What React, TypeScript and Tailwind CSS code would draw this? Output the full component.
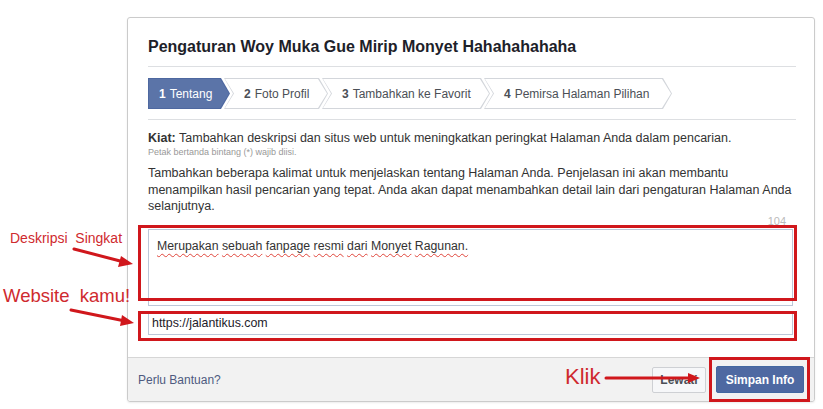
import React from 'react';

const tabs = [
  { n: '1', label: 'Tentang', w: 'w-[82px]', first: true, active: true },
  { n: '2', label: 'Foto Profil', w: 'w-[104px]' },
  { n: '3', label: 'Tambahkan ke Favorit', w: 'w-[168px]' },
  { n: '4', label: 'Pemirsa Halaman Pilihan', w: 'w-[188px]' },
];

const descWords = ['Merupakan', 'sebuah', 'fanpage', 'resmi', 'dari', 'Monyet', 'Ragunan.'];

function Tab({ n, label, w, first, active }: { n: string; label: string; w: string; first?: boolean; active?: boolean }) {
  const shape = first
    ? '[clip-path:polygon(0_0,calc(100%_-_9px)_0,100%_50%,calc(100%_-_9px)_100%,0_100%)]'
    : '[clip-path:polygon(0_0,calc(100%_-_9px)_0,100%_50%,calc(100%_-_9px)_100%,0_100%,9px_50%)]';

  return (
    <div className={`relative h-[31px] shrink-0 ${w} ${first ? '' : '-ml-[6px]'}`}>
      <div className={`absolute inset-0 ${shape} ${active ? 'bg-[#4e68a0]' : 'bg-[#d3d6db]'}`} />
      <div className={`absolute inset-[1px] ${shape} ${active ? 'bg-[#5b74a8]' : 'bg-white'}`} />
      <div
        className={`relative flex h-full items-center text-[12px] ${first ? 'pl-[11px]' : 'pl-[20px]'} ${
          active ? 'text-white' : 'text-[#4b4f56]'
        }`}
      >
        <span className="font-bold">{n}</span>
        <span className="ml-[4px]">{label}</span>
      </div>
    </div>
  );
}

export default function App() {
  return (
    <div className="relative h-[409px] w-[823px] overflow-hidden bg-white font-['Liberation_Sans',Arial,sans-serif]">
      <div className="ml-[127px] mt-[17px] flex h-[385px] w-[688px] flex-col rounded-[3px] border border-[#cbcbcb] shadow-[0_1px_2px_rgba(0,0,0,0.08)]">
        <div className="pl-[20px] pr-[18px]">
          <h1 className="border-b border-[#dddfe2] pb-[9px] pt-[19px] text-[16px] font-bold leading-[20px] text-[#1d2129]">
            Pengaturan Woy Muka Gue Mirip Monyet Hahahahahaha
          </h1>

          <div className="border-b border-[#dddfe2] pb-[10px] pt-[11px]">
            <div className="flex">
              {tabs.map((t) => (
                <Tab key={t.n} {...t} />
              ))}
            </div>
          </div>

          <p className="mt-[11px] whitespace-nowrap text-[12.5px] leading-[15px] text-[#333]">
            <span className="font-bold">Kiat:</span> Tambahkan deskripsi dan situs web untuk meningkatkan peringkat
            Halaman Anda dalam pencarian.
          </p>
          <p className="text-[9px] leading-[12px] text-[#999]">Petak bertanda bintang (*) wajib diisi.</p>

          <p className="mt-[7px] whitespace-nowrap text-[12.5px] leading-[16.5px] text-[#333]">
            Tambahkan beberapa kalimat untuk menjelaskan tentang Halaman Anda. Penjelasan ini akan membantu
            <br />
            menampilkan hasil pencarian yang tepat. Anda akan dapat menambahkan detail lain dari pengaturan Halaman Anda
            <br />
            selanjutnya.
          </p>

          <div className="pr-[10px] text-right text-[11px] leading-[12px] text-[#bbb]">104</div>

          <div className="mt-[2px] h-[77px] w-[645px] border border-[#bdc7d8] px-[8px] py-[9px] text-[12.3px] leading-[15px] text-[#333]">
            {descWords.map((word, i) => (
              <React.Fragment key={i}>
                <span className="underline decoration-[#e0453b] decoration-wavy decoration-1 underline-offset-[3px]">
                  {word}
                </span>{' '}
              </React.Fragment>
            ))}
          </div>

          <div className="mt-[7px] flex h-[22px] w-[645px] items-center border border-[#bdc7d8] px-[3px] text-[12.4px] text-[#1d2129]">
            https://jalantikus.com
          </div>
        </div>

        <div className="mt-auto flex h-[44px] items-center justify-between rounded-b-[3px] border-t border-[#d6d6d6] bg-[#f2f2f2] pl-[10px] pr-[10px]">
          <span className="text-[12px] text-[#4e5a80]">Perlu Bantuan?</span>
          <div className="flex items-center gap-[10px]">
            <button className="h-[26px] w-[54px] rounded-[2px] border border-[#ced0d4] bg-[#f6f7f9] text-[12px] font-bold text-[#4b4f56]">
              Lewati
            </button>
            <button className="h-[27px] w-[88px] rounded-[2px] border border-[#4267a0] bg-[#4e69a2] text-[12px] font-bold text-white">
              Simpan Info
            </button>
          </div>
        </div>
      </div>

      {/* annotations drawn on top of the screenshot */}
      <span className="absolute left-[10px] top-[230px] whitespace-pre text-[14px] leading-[16px] text-[#cf2a2e]">
        {'Deskripsi  Singkat'}
      </span>
      <span className="absolute left-[3px] top-[285px] whitespace-pre text-[18.5px] leading-[22px] text-[#cf2a2e]">
        {'Website  kamu!'}
      </span>
      <span className="absolute left-[565px] top-[365px] text-[22px] leading-[24px] text-[#cf2a2e]">Klik</span>

      <svg className="pointer-events-none absolute left-0 top-0" width="823" height="409" viewBox="0 0 823 409">
        <g fill="none" stroke="#d0171c" strokeWidth="3">
          <rect x="139.5" y="226.5" width="656" height="73" />
          <rect x="139.5" y="312.5" width="656" height="27" />
          <rect x="710.5" y="358.5" width="98" height="42" />
        </g>
        <g stroke="#d0171c" strokeWidth="3" strokeLinecap="round">
          <line x1="74" y1="249" x2="124" y2="262" />
          <line x1="71" y1="310" x2="125" y2="321" />
          <line x1="606" y1="378" x2="690" y2="378" />
        </g>
        <g fill="#d0171c">
          <polygon points="133,264 121,256 118,267" />
          <polygon points="134,323 122,315 120,326" />
          <polygon points="700,378 688,373 688,383" />
        </g>
      </svg>
    </div>
  );
}
